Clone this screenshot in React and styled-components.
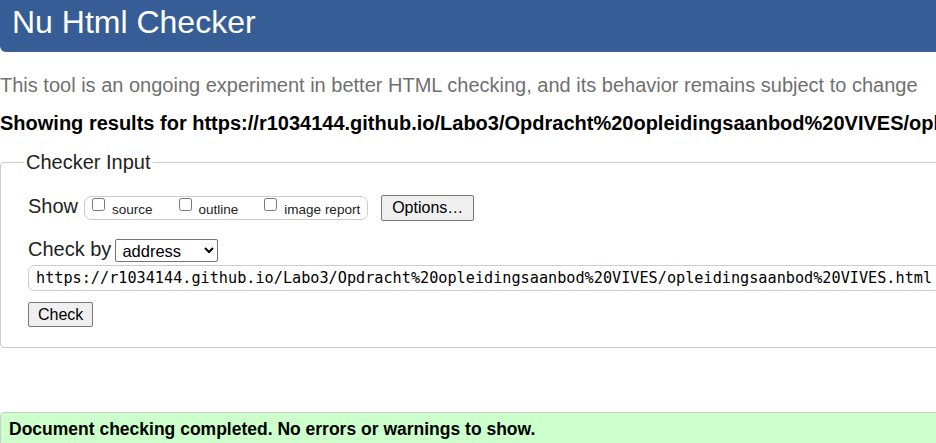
import React from 'react';
import styled, { createGlobalStyle } from 'styled-components';

const GlobalStyle = createGlobalStyle`
  html, body {
    margin: 0;
    padding: 0;
    overflow: hidden;
    background: #fff;
  }

  body {
    font-family: "Liberation Sans", Arial, sans-serif;
    color: #222;
  }
`;

const Page = styled.div`
  width: 1000px;
`;

const Masthead = styled.header`
  background: #365d95;
  border-radius: 0 0 0 6px;
  padding: 6px 12px 14px;
`;

const Title = styled.h1`
  margin: 0;
  font-size: 32px;
  line-height: 32px;
  font-weight: normal;
  color: #fff;
`;

const Lead = styled.p`
  margin: 22px 0 0;
  font-size: 20px;
  line-height: 23px;
  color: #707070;
`;

const ResultsFor = styled.h2`
  margin: 15px 0 0;
  font-size: 20px;
  line-height: 23px;
  font-weight: bold;
  color: #000;
  white-space: nowrap;
`;

const CheckerForm = styled.fieldset`
  margin: 16px 0 0;
  padding: 21px 27px 20px;
  border: 1px solid #ccc;
  border-radius: 4px;
`;

const Legend = styled.legend`
  margin-left: -4px;
  padding: 0 2px;
  font-size: 20px;
  line-height: 23px;
  color: #222;
`;

const FormRow = styled.div`
  display: flex;
  align-items: flex-start;
  margin-top: ${(p) => p.$gap || 0}px;
`;

const RowLabel = styled.label`
  font-size: 20px;
  line-height: 23px;
  color: #222;
  margin-right: ${(p) => p.$space || 0}px;
`;

const OptionPill = styled.span`
  display: inline-flex;
  align-items: flex-start;
  box-sizing: border-box;
  height: 24px;
  margin-top: 1px;
  padding: 0 7px;
  border: 1px solid #ccc;
  border-radius: 7px;
`;

const OptionLabel = styled.label`
  display: flex;
  align-items: flex-start;
  margin-right: ${(p) => (p.$last ? 0 : 26)}px;
`;

const Checkbox = styled.input.attrs({ type: 'checkbox' })`
  width: 13px;
  height: 13px;
  margin: 1px 7px 0 0;
`;

const OptionText = styled.span`
  padding-top: 5px;
  font-size: 13.5px;
  line-height: 15px;
  color: #222;
`;

const PlainButton = styled.button`
  box-sizing: border-box;
  height: ${(p) => p.$height || 26}px;
  margin-left: ${(p) => p.$offset || 0}px;
  padding: 0 ${(p) => p.$pad || 10}px;
  font-family: "Liberation Sans", Arial, sans-serif;
  font-size: 16px;
  color: #000;
  background: #efefef;
  border: 1px solid #767676;
  border-radius: 2px;
`;

const KindSelect = styled.select`
  box-sizing: border-box;
  width: 103px;
  height: 23px;
  margin-top: 1px;
  padding: 0 2px;
  font-family: "Liberation Sans", Arial, sans-serif;
  font-size: 16.5px;
  color: #000;
  background: #fff;
  border: 1px solid #767676;
  border-radius: 2px;
`;

const UrlField = styled.input`
  box-sizing: border-box;
  width: 100%;
  height: 26px;
  padding: 0 7px;
  font-family: "DejaVu Sans Mono", "Liberation Mono", monospace;
  font-size: 15.2px;
  color: #000;
  border: 1px solid #ccc;
  border-radius: 6px;
  outline: none;
`;

const Success = styled.p`
  margin: 64px 0 0;
  padding: 6px 8px 10px;
  font-size: 17.5px;
  font-weight: bold;
  color: #000;
  background: #ccffcc;
  border: 1px solid #ccc;
  border-radius: 4px;
`;

const options = ['source', 'outline', 'image report'];

const checkedUrl =
  'https://r1034144.github.io/Labo3/Opdracht%20opleidingsaanbod%20VIVES/opleidingsaanbod%20VIVES.html';

function App() {
  return (
    <Page>
      <GlobalStyle />
      <Masthead>
        <Title>Nu Html Checker</Title>
      </Masthead>

      <Lead>
        This tool is an ongoing experiment in better HTML checking, and its behavior remains subject to change
      </Lead>
      <ResultsFor>
        Showing results for https://r1034144.github.io/Labo3/Opdracht%20opleidingsaanbod%20VIVES/opleidingsaanbod%20VIVES.html
      </ResultsFor>

      <CheckerForm>
        <Legend>Checker Input</Legend>

        <FormRow>
          <RowLabel $space={6}>Show</RowLabel>
          <OptionPill>
            {options.map((name, i) => (
              <OptionLabel key={name} $last={i === options.length - 1}>
                <Checkbox />
                <OptionText>{name}</OptionText>
              </OptionLabel>
            ))}
          </OptionPill>
          <PlainButton type="button" $offset={13}>
            Options…
          </PlainButton>
        </FormRow>

        <FormRow $gap={17}>
          <RowLabel $space={4} htmlFor="docselect">
            Check by
          </RowLabel>
          <KindSelect id="docselect" defaultValue="address">
            <option value="address">address</option>
            <option value="file">file upload</option>
            <option value="textarea">text input</option>
          </KindSelect>
        </FormRow>

        <FormRow $gap={3}>
          <UrlField type="url" defaultValue={checkedUrl} />
        </FormRow>

        <FormRow $gap={11}>
          <PlainButton type="submit" $height={25} $pad={9}>
            Check
          </PlainButton>
        </FormRow>
      </CheckerForm>

      <Success>Document checking completed. No errors or warnings to show.</Success>
    </Page>
  );
}

export default App;
